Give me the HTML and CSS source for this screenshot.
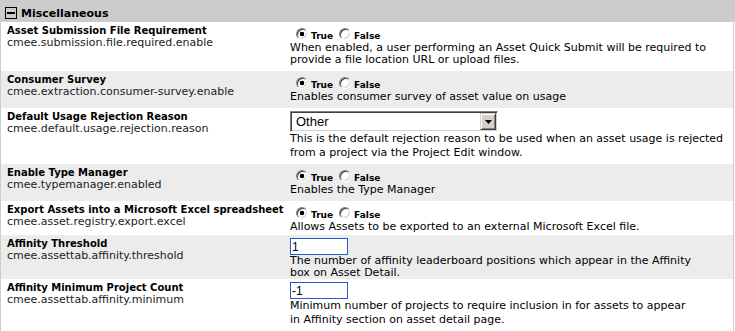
FILE: index.html
```html
<!DOCTYPE html>
<html>
<head>
<meta charset="utf-8">
<title>Miscellaneous</title>
<link rel="stylesheet" href="styles.css">
</head>
<body>
<div class="panel">
  <div class="panel-head"><span class="toggle"></span><span class="panel-title">Miscellaneous</span></div>

  <div class="row">
    <div class="label"><div class="name">Asset Submission File Requirement</div><div class="key">cmee.submission.file.required.enable</div></div>
    <div class="value">
      <div class="opts"><input class="radio" type="radio" name="r1" checked><span class="opt">True</span><input class="radio" type="radio" name="r1"><span class="opt">False</span></div>
      <div class="desc">When enabled, a user performing an Asset Quick Submit will be required to<br>provide a file location URL or upload files.</div>
    </div>
  </div>

  <div class="row alt">
    <div class="label"><div class="name">Consumer Survey</div><div class="key">cmee.extraction.consumer-survey.enable</div></div>
    <div class="value">
      <div class="opts"><input class="radio" type="radio" name="r2" checked><span class="opt">True</span><input class="radio" type="radio" name="r2"><span class="opt">False</span></div>
      <div class="desc">Enables consumer survey of asset value on usage</div>
    </div>
  </div>

  <div class="row">
    <div class="label"><div class="name">Default Usage Rejection Reason</div><div class="key">cmee.default.usage.rejection.reason</div></div>
    <div class="value">
      <div class="select"><span class="select-text">Other</span><span class="select-btn"><svg width="7" height="4" viewBox="0 0 7 4"><path d="M0 0h7L3.5 4z" fill="#000"/></svg></span></div>
      <div class="desc loose">This is the default rejection reason to be used when an asset usage is rejected<br>from a project via the Project Edit window.</div>
    </div>
  </div>

  <div class="row alt">
    <div class="label"><div class="name">Enable Type Manager</div><div class="key">cmee.typemanager.enabled</div></div>
    <div class="value">
      <div class="opts"><input class="radio" type="radio" name="r4" checked><span class="opt">True</span><input class="radio" type="radio" name="r4"><span class="opt">False</span></div>
      <div class="desc">Enables the Type Manager</div>
    </div>
  </div>

  <div class="row">
    <div class="label"><div class="name">Export Assets into a Microsoft Excel spreadsheet</div><div class="key">cmee.asset.registry.export.excel</div></div>
    <div class="value tight">
      <div class="opts"><input class="radio" type="radio" name="r5" checked><span class="opt">True</span><input class="radio" type="radio" name="r5"><span class="opt">False</span></div>
      <div class="desc">Allows Assets to be exported to an external Microsoft Excel file.</div>
    </div>
  </div>

  <div class="row alt">
    <div class="label"><div class="name">Affinity Threshold</div><div class="key">cmee.assettab.affinity.threshold</div></div>
    <div class="value flush">
      <input class="num" type="text" value="1">
      <div class="desc">The number of affinity leaderboard positions which appear in the Affinity<br>box on Asset Detail.</div>
    </div>
  </div>

  <div class="row">
    <div class="label"><div class="name">Affinity Minimum Project Count</div><div class="key">cmee.assettab.affinity.minimum</div></div>
    <div class="value">
      <input class="num" type="text" value="-1">
      <div class="desc loose">Minimum number of projects to require inclusion in for assets to appear<br>in Affinity section on asset detail page.</div>
    </div>
  </div>
</div>
</body>
</html>
```

FILE: styles.css
```css
body {
  margin: 0;
  background: #fff;
  font-family: "DejaVu Sans", Verdana, sans-serif;
  color: #000;
}

.panel-head {
  display: flex;
  align-items: flex-start;
  height: 22px;
  box-sizing: border-box;
  padding: 7px 0 0 5px;
  background: #ccc;
}

.toggle {
  display: flex;
  align-items: center;
  justify-content: center;
  width: 12px;
  height: 12px;
  box-sizing: border-box;
  border: 1px solid #000;
  margin-right: 4px;
}

.toggle::before {
  content: "";
  width: 8px;
  height: 2px;
  background: #000;
}

.panel-title {
  font-weight: bold;
  font-size: 11px;
  line-height: 13px;
}

.row {
  display: grid;
  grid-template-columns: 287px 445px;
  width: 734px;
  box-sizing: border-box;
  border-left: 1px solid #ccc;
  border-right: 1px solid #ccc;
  background: #fff;
}

.row.alt {
  background: #ececec;
}

.label {
  padding: 3px 0 0 6px;
  white-space: nowrap;
}

.name {
  font-weight: bold;
  font-size: 10px;
  line-height: 12px;
}

.key {
  font-size: 11px;
  line-height: 11px;
  color: #222;
}

.value {
  padding: 2px 0 5px 2px;
}

.value.tight {
  padding-bottom: 2px;
}

.value.flush {
  padding-bottom: 0;
}

.opts {
  display: flex;
  align-items: flex-end;
  height: 17px;
  margin-bottom: 1px;
}

.radio {
  -webkit-appearance: none;
  appearance: none;
  margin: 0 0 1px 6px;
  width: 12px;
  height: 12px;
  box-sizing: border-box;
  border-radius: 50%;
  border: 1px solid;
  border-color: #808080 #fff #fff #808080;
  box-shadow: inset 1px 1px #404040, inset -1px -1px #d4d0c8;
  background: #fff;
}

.radio:checked {
  background: radial-gradient(circle, #000 0 2px, #fff 2.6px);
}

.opt {
  font-weight: bold;
  font-size: 9px;
  line-height: 11px;
  margin: 0 0 -1px 3px;
}

.desc {
  font-size: 11px;
  line-height: 12px;
  white-space: nowrap;
}

.desc.loose {
  line-height: 13.5px;
}

.select {
  display: flex;
  margin-top: 1px;
  width: 208px;
  height: 21px;
  box-sizing: border-box;
  padding: 1px;
  border: 1px solid;
  border-color: #808080 #fff #fff #808080;
  box-shadow: inset 1px 1px #404040, inset -1px -1px #d4d0c8;
  background: #fff;
}

.select-text {
  flex: 1;
  padding-left: 4px;
  font-family: "Liberation Sans", Arial, sans-serif;
  font-size: 13px;
  line-height: 17px;
}

.select-btn {
  display: flex;
  align-items: center;
  justify-content: center;
  width: 16px;
  height: 17px;
  box-sizing: border-box;
  background: #d4d0c8;
  border: 1px solid;
  border-color: #d4d0c8 #404040 #404040 #d4d0c8;
  box-shadow: inset 1px 1px #fff, inset -1px -1px #808080;
}

.num {
  display: block;
  margin: 1px 0 0;
  width: 58px;
  height: 17px;
  box-sizing: border-box;
  border: 1px solid #1f5fc9;
  padding: 0 1px;
  font-family: "Liberation Sans", Arial, sans-serif;
  font-size: 12px;
  color: #000;
  background: #fff;
  outline: none;
}
```
